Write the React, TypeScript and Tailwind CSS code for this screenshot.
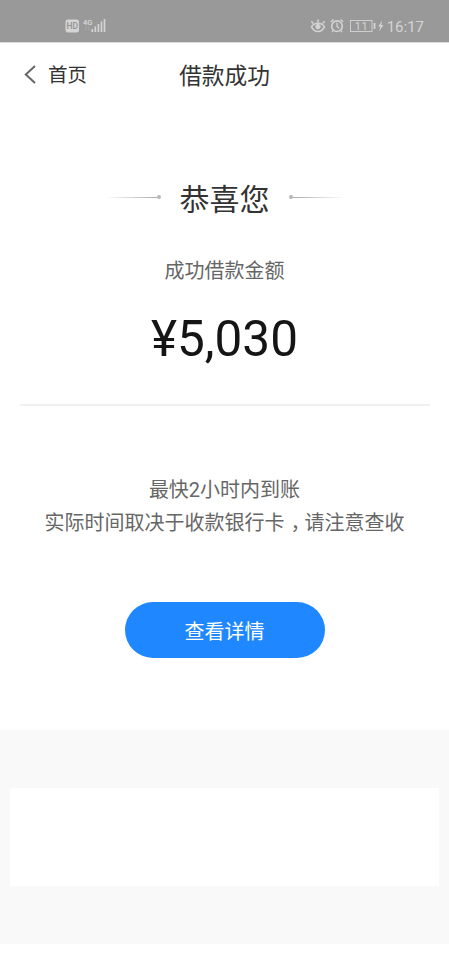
import React from "react";

function StatusBar() {
  return (
    <div className="flex h-[43px] shrink-0 items-start justify-between border-b border-[#dcdcdc] bg-[#999] pr-[25px] pl-[65px] text-[#d4d4d4]">
      <div className="flex pt-[17px]">
        <svg width="42" height="17" viewBox="0 0 42 17" className="block">
          <rect x="0.5" y="2.500" width="13.5" height="13" rx="2.5" fill="#d4d4d4" />
          <text x="7.2" y="12" textAnchor="middle" fontSize="8.5" fontWeight="500" fill="#929292" className="font-['Roboto',sans-serif]">HD</text>
          <text x="18" y="7.500" fontSize="7.5" fontWeight="500" fill="#dadada" className="font-['Roboto',sans-serif]">4G</text>
          <path d="M21 9v5M19.5 12.5 21 14M24 14V9" stroke="#a8a8a8" strokeWidth="0.8" fill="none" />
          <path d="M27.3 12v3M30.3 9.500v5.500M33.400 7v8M36.500 4.500v10.500M39.500 2v13" stroke="#d4d4d4" strokeWidth="1.7" />
        </svg>
      </div>
      <div className="flex pt-[16px]">
        <svg width="75" height="20" viewBox="0 0 75 20" className="mr-[2px] block" fill="none" stroke="#d4d4d4">
          <path d="M1.500 10.800C4.500 17 11.500 17 14.500 10.800C11.500 6 4.500 6 1.500 10.800Z" strokeWidth="1.5" />
          <circle cx="8" cy="10.600" r="2.200" fill="#d4d4d4" strokeWidth="1" />
          <path d="M8 6.500V3.500M3.500 7.500 1.300 5.300M12.500 7.500 14.700 5.300" strokeWidth="1.5" />
          <circle cx="27" cy="10.200" r="5.300" strokeWidth="1.6" />
          <path d="M27 6.800v3.700l2.200 1.700M20.800 6 23.500 3.500M33.200 6 30.500 3.500M23 14.700 22 16M31 14.700 32 16" strokeWidth="1.3" />
          <rect x="40.500" y="4.500" width="21.500" height="11" strokeWidth="0.9" />
          <text x="51.500" y="14" textAnchor="middle" fontSize="11" letterSpacing="0.5" fill="#d4d4d4" stroke="none" className="font-['Roboto',sans-serif]">11</text>
          <path d="M64.500 7v6" strokeWidth="1.8" />
          <path d="m72.200 4.500-4 6h2.200l-1.200 5 4.200-6.500h-2.300z" fill="#d4d4d4" stroke="none" />
        </svg>
        <span className="font-['Roboto',sans-serif] text-[15px] leading-[22px]">16:17</span>
      </div>
    </div>
  );
}

function Flourish({ mirrored = false }: { mirrored?: boolean }) {
  return (
    <div className={`mb-[2px] flex w-[56px] items-center ${mirrored ? "flex-row-reverse" : ""}`}>
      <div className={`h-px flex-1 from-transparent to-[#aaa] ${mirrored ? "bg-linear-to-l" : "bg-linear-to-r"}`} />
      <div className="size-[4px] rounded-full bg-[#b8b8b8]" />
    </div>
  );
}

export default function App() {
  return (
    <div className="flex h-[960px] w-[449px] flex-col overflow-hidden bg-white font-['Roboto','Noto_Sans_CJK_SC',sans-serif] text-[#333]">
      <StatusBar />
      <header className="grid h-[63px] shrink-0 grid-cols-[1fr_auto_1fr] items-center">
        <div className="flex items-center gap-[11px] pl-[24px]">
          <svg width="13" height="20" viewBox="0 0 13 20" fill="none" stroke="#666" strokeWidth="2">
            <path d="M11 1 1.800 9.500l9.200 8.500" />
          </svg>
          <span className="pt-[2px] text-[19.500px] leading-[28px]">首页</span>
        </div>
        <h1 className="pt-[4px] text-[22.700px] leading-[32px]">借款成功</h1>
      </header>

      <main className="flex h-[624px] shrink-0 flex-col items-center px-[20px]">
        <div className="mt-[70px] flex h-[44px] items-center gap-[19px]">
          <Flourish />
          <h2 className="pt-[3px] text-[30px] leading-[44px]">恭喜您</h2>
          <Flourish mirrored />
        </div>
        <p className="mt-[36px] text-[20px] leading-[30px] text-[#666]">成功借款金额</p>
        <p className="mt-[23px] text-[49.500px] leading-[60px] text-[#151515]">¥5,030</p>
        <div className="mt-[35px] h-[2px] w-[410px] shrink-0 bg-[#f0f0f0]" />
        <div className="mt-[68px] text-center text-[20px] leading-[33px] whitespace-nowrap text-[#666]">
          <p>最快2小时内到账</p>
          <p>
            实际时间取决于收款银行卡<span className="pr-[4px] pl-[6px] [font-feature-settings:'halt']">，</span>请注意查收
          </p>
        </div>
        <button className="mt-[62px] h-[56px] w-[200px] shrink-0 rounded-full bg-[#1f87ff] pt-[3px] text-[20px] text-white">
          查看详情
        </button>
      </main>

      <section className="h-[214px] shrink-0 bg-[#f9f9f9] px-[10px] pt-[58px]">
        <div className="h-[98px] bg-white" />
      </section>
    </div>
  );
}
